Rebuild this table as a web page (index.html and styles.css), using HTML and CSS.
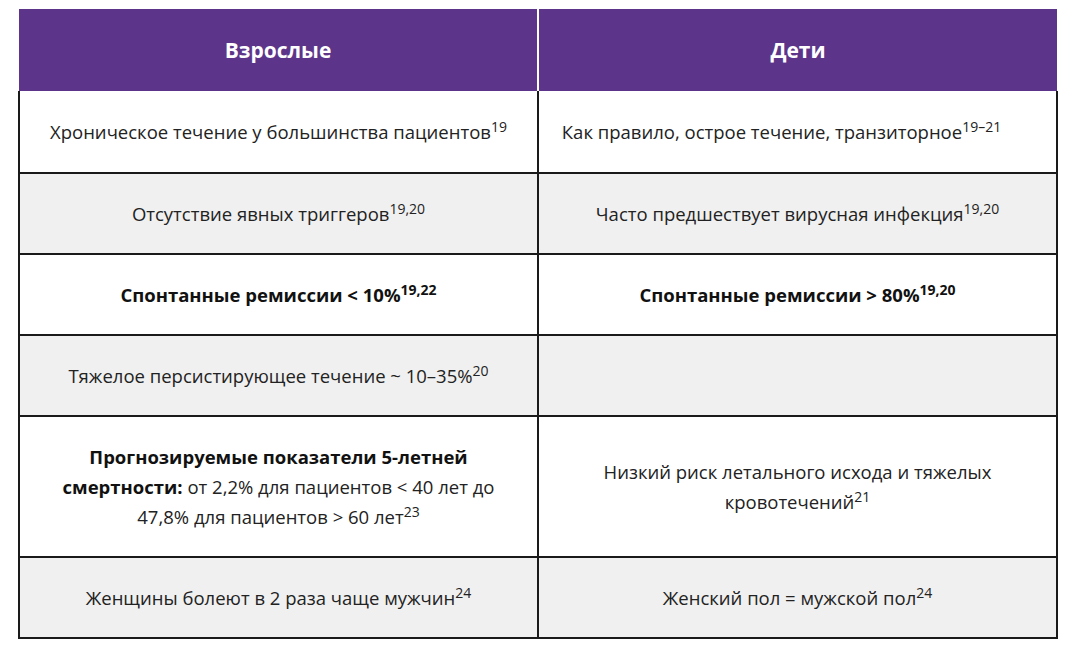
FILE: index.html
```html
<!DOCTYPE html>
<html lang="ru">
<head>
<meta charset="utf-8">
<link rel="stylesheet" href="styles.css">
</head>
<body>
<table class="cmp">
  <thead>
    <tr><th>Взрослые</th><th>Дети</th></tr>
  </thead>
  <tbody>
    <tr class="r1">
      <td>Хроническое течение у большинства пациентов<sup>19</sup></td>
      <td class="shift">Как правило, острое течение, транзиторное<sup>19–21</sup></td>
    </tr>
    <tr class="gray">
      <td>Отсутствие явных триггеров<sup>19,20</sup></td>
      <td>Часто предшествует вирусная инфекция<sup>19,20</sup></td>
    </tr>
    <tr>
      <td><b>Спонтанные ремиссии &lt; 10%<sup>19,22</sup></b></td>
      <td><b>Спонтанные ремиссии &gt; 80%<sup>19,20</sup></b></td>
    </tr>
    <tr class="gray">
      <td>Тяжелое персистирующее течение ~ 10–35%<sup>20</sup></td>
      <td></td>
    </tr>
    <tr class="tall">
      <td><b>Прогнозируемые показатели 5-летней смертности:</b> от 2,2% для пациентов &lt; 40 лет до 47,8% для пациентов &gt; 60 лет<sup>23</sup></td>
      <td>Низкий риск летального исхода и тяжелых кровотечений<sup>21</sup></td>
    </tr>
    <tr class="gray">
      <td>Женщины болеют в 2 раза чаще мужчин<sup>24</sup></td>
      <td>Женский пол = мужской пол<sup>24</sup></td>
    </tr>
  </tbody>
</table>
</body>
</html>
```

FILE: styles.css
```css
html, body {
  margin: 0;
  padding: 0;
  background: #ffffff;
}
body {
  padding: 9px 22px 0 18px;
  font-family: "Open Sans", "Noto Sans", sans-serif;
  color: #222222;
}
.cmp {
  width: 1040px;
  border-collapse: collapse;
  table-layout: fixed;
}
.cmp th {
  background: #5c358a;
  color: #ffffff;
  font-size: 21px;
  font-weight: 700;
  height: 82px;
  padding: 0;
  border-left: 2px solid #ffffff;
  text-align: center;
}
.cmp th:first-child {
  border-left: none;
}
.cmp td {
  border: 2px solid #1a1a1a;
  text-align: center;
  vertical-align: middle;
  font-size: 18.5px;
  line-height: 30px;
  height: 79px;
  padding: 0 10px;
}
.cmp tr.r1 td {
  height: 81px;
}
.cmp td.shift {
  padding: 0 40px 0 8px;
}
.cmp tr.tall td {
  height: 139px;
  padding: 0 34px;
}
.cmp tr.gray td {
  background: #f0f0f0;
}
.cmp tbody tr:first-child td {
  border-top: none;
}
.cmp sup {
  font-size: 14px;
  line-height: 0;
  vertical-align: 7px;
}
.cmp b {
  font-weight: 700;
  color: #111;
}
```
